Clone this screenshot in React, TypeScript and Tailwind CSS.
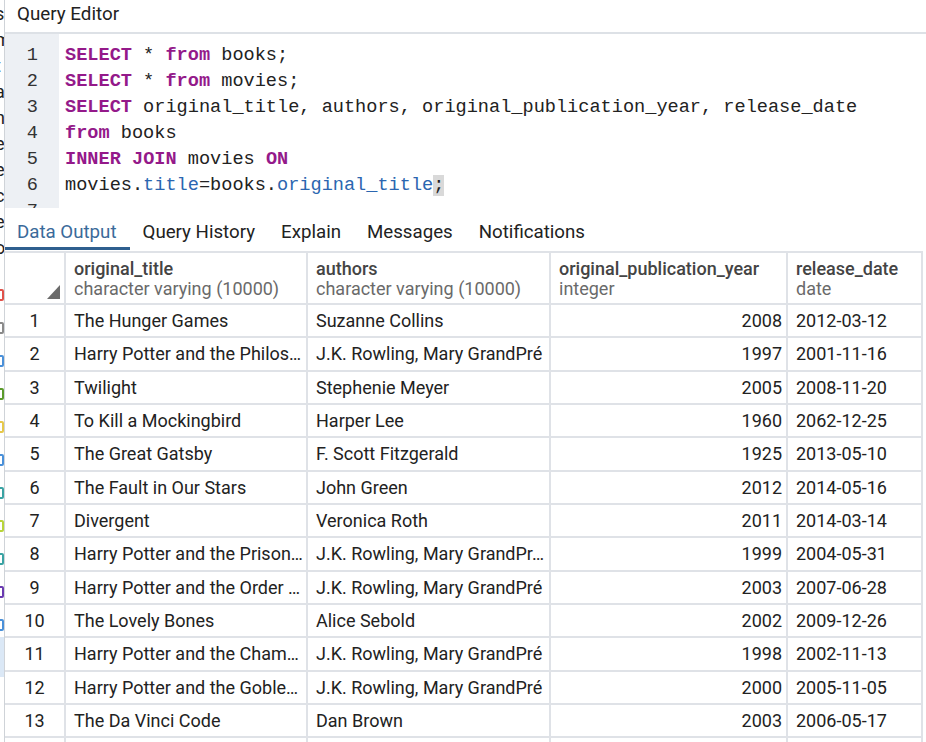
import React from "react";

const rows: [string, string, string, string][] = [
  ["The Hunger Games", "Suzanne Collins", "2008", "2012-03-12"],
  ["Harry Potter and the Philos…", "J.K. Rowling, Mary GrandPré", "1997", "2001-11-16"],
  ["Twilight", "Stephenie Meyer", "2005", "2008-11-20"],
  ["To Kill a Mockingbird", "Harper Lee", "1960", "2062-12-25"],
  ["The Great Gatsby", "F. Scott Fitzgerald", "1925", "2013-05-10"],
  ["The Fault in Our Stars", "John Green", "2012", "2014-05-16"],
  ["Divergent", "Veronica Roth", "2011", "2014-03-14"],
  ["Harry Potter and the Prison…", "J.K. Rowling, Mary GrandPr…", "1999", "2004-05-31"],
  ["Harry Potter and the Order …", "J.K. Rowling, Mary GrandPré", "2003", "2007-06-28"],
  ["The Lovely Bones", "Alice Sebold", "2002", "2009-12-26"],
  ["Harry Potter and the Cham…", "J.K. Rowling, Mary GrandPré", "1998", "2002-11-13"],
  ["Harry Potter and the Goble…", "J.K. Rowling, Mary GrandPré", "2000", "2005-11-05"],
  ["The Da Vinci Code", "Dan Brown", "2003", "2006-05-17"],
  ["", "", "", ""],
];

const K = ({ children }: { children: React.ReactNode }) => (
  <span className="text-[#94198a] font-bold">{children}</span>
);
const P = ({ children }: { children: React.ReactNode }) => (
  <span className="text-[#2b66b0]">{children}</span>
);

const grid = "grid grid-cols-[61px_242px_243px_237px_135px]";
const cell = "border-r-2 border-b-2 border-[#dfe2e7] overflow-hidden whitespace-nowrap";

function SideStrip() {
  const letters = ["s", "m", "t", "a", "n", "e", "e", "c", "e", "o"];
  const icons = ["#e0524a", "#8a8a8a", "#4a90d9", "#5a9a2a", "#e6c84a", "#4a90d9", "#3aa3a3", "#b8d43a", "#3aa3a3", "#6a3ab0", "#4a90d9"];
  return (
    <div className="w-[5px] shrink-0 overflow-hidden border-r border-[#cfd3d8] bg-white">
      <div className="ml-[-5px] flex flex-col pt-[1px] font-['Roboto'] text-[18px] leading-[26px] text-[#222]">
        {letters.map((l, i) => (
          <span key={i}>{l}</span>
        ))}
      </div>
      <div className="mt-[28px] flex flex-col gap-[21px]">
        {icons.map((c, i) => (
          <div key={i} className="ml-[-6px] h-[12px] w-[10px] rounded-[2px] border-2" style={{ borderColor: c }} />
        ))}
      </div>
      <div className="mt-[6px] h-[40px] bg-[#dbe8f6]" />
    </div>
  );
}

export default function App() {
  return (
    <div className="w-[926px] h-[742px] overflow-hidden bg-white flex font-['Roboto','Liberation_Sans',sans-serif] text-[#222]">
      <SideStrip />
      <div className="flex-1 flex flex-col min-w-0">
        <div className="h-[34px] shrink-0 pl-[12px] text-[18.8px] leading-[28px] border-b-2 border-[#dde1e6]">
          Query Editor
        </div>
        <div className="h-[174px] shrink-0 flex overflow-hidden font-['Liberation_Mono',monospace] text-[18.6px] leading-[26px]">
          <div className="w-[54px] shrink-0 bg-[#edf0f4] pt-[9px] pr-[21px] text-right text-[#333]">
            {[1, 2, 3, 4, 5, 6, 7].map((n) => (
              <div key={n}>{n}</div>
            ))}
          </div>
          <div className="pt-[9px] pl-[6px] whitespace-pre">
            <div><K>SELECT</K> * <K>from</K> books;</div>
            <div><K>SELECT</K> * <K>from</K> movies;</div>
            <div><K>SELECT</K> original_title, authors, original_publication_year, release_date</div>
            <div><K>from</K> books</div>
            <div><K>INNER</K> <K>JOIN</K> movies <K>ON</K></div>
            <div>movies.<P>title</P>=books.<P>original_title</P><span className="bg-[#d9d9d9]">;</span></div>
            <div>&nbsp;</div>
          </div>
        </div>
        <div className="h-[42px] shrink-0 flex items-end text-[18.7px]">
          <div className="h-[40px] pl-[12px] pr-[13px] pt-[7px] flex items-center border-b-[3px] border-[#2f5f8f] text-[#3a6a9a]">Data Output</div>
          <div className="h-[40px] px-[13px] pt-[7px] flex items-center border-b-[3px] border-transparent">Query History</div>
          <div className="h-[40px] px-[13px] pt-[7px] flex items-center border-b-[3px] border-transparent">Explain</div>
          <div className="h-[40px] px-[13px] pt-[7px] flex items-center border-b-[3px] border-transparent">Messages</div>
          <div className="h-[40px] px-[13px] pt-[7px] flex items-center border-b-[3px] border-transparent">Notifications</div>
        </div>
        <div className="mt-[1px] border-t-2 border-[#dfe2e7] w-[918px]">
          <div className={`${grid} h-[52px]`}>
            <div className={`${cell} flex items-end justify-end pr-[4px] pb-[4px]`}>
              <svg width="13" height="14" viewBox="0 0 13 14">
                <polygon points="13,0 13,14 0,14" fill="#6b6b6b" />
              </svg>
            </div>
            {[
              ["original_title", "character varying (10000)"],
              ["authors", "character varying (10000)"],
              ["original_publication_year", "integer"],
              ["release_date", "date"],
            ].map(([n, t]) => (
              <div key={n} className={`${cell} pl-[8px] pt-[6px] text-[18px] leading-[20px]`}>
                <div className="font-medium text-[#444]">{n}</div>
                <div className="text-[#6a6a6a]">{t}</div>
              </div>
            ))}
          </div>
          {rows.map((r, i) => (
            <div key={i} className={`${grid} h-[33.33px] text-[18px] leading-[32px]`}>
              <div className={`${cell} text-center`}>{r[0] ? i + 1 : ""}</div>
              <div className={`${cell} pl-[8px] text-ellipsis`}>{r[0]}</div>
              <div className={`${cell} pl-[8px] text-ellipsis`}>{r[1]}</div>
              <div className={`${cell} pr-[4px] text-right`}>{r[2]}</div>
              <div className={`${cell} pl-[8px]`}>{r[3]}</div>
            </div>
          ))}
        </div>
      </div>
    </div>
  );
}
